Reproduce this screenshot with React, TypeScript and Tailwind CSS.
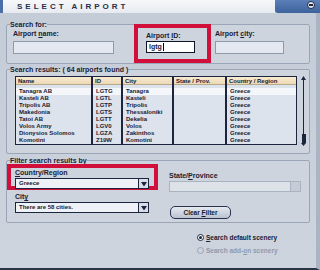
import React from "react";

const rows = [
  { name: "Tanagra AB", id: "LGTG", city: "Tanagra", country: "Greece" },
  { name: "Kasteli AB", id: "LGTL", city: "Kasteli", country: "Greece" },
  { name: "Tripolis AB", id: "LGTP", city: "Tripolis", country: "Greece" },
  { name: "Makedonia", id: "LGTS", city: "Thessaloniki", country: "Greece" },
  { name: "Tatoi AB", id: "LGTT", city: "Dekelia", country: "Greece" },
  { name: "Volos Army", id: "LGV0", city: "Volos", country: "Greece" },
  { name: "Dionysios Solomos", id: "LGZA", city: "Zakinthos", country: "Greece" },
  { name: "Komotini", id: "Z19W", city: "Komotini", country: "Greece" },
];

const cols = [
  { label: "Name", w: "w-[77px]", key: "name" },
  { label: "ID", w: "w-[30px]", key: "id" },
  { label: "City", w: "w-[51px]", key: "city" },
  { label: "State / Prov.", w: "w-[53px]", key: "state" },
  { label: "Country / Region", w: "flex-1", key: "country" },
] as const;

function Select({ value, disabled }: { value: string; disabled?: boolean }) {
  return (
    <div
      className={`flex h-[11px] border ${
        disabled ? "border-[#a9b3c1] bg-[#dde2e9]" : "border-[#1c2540] bg-[#eef1f6]"
      }`}
    >
      <div className="flex-1 pl-[3px] text-[6px] font-bold leading-[9px] text-[#1a2033]">{value}</div>
      <div
        className={`flex w-[10px] items-center justify-center border-l ${
          disabled ? "border-[#a9b3c1] bg-[#c6ccd6]" : "border-[#1c2540] bg-[#d9dee6]"
        }`}
      >
        {!disabled && (
          <svg width="6" height="6" viewBox="0 0 6 6">
            <path d="M0 1h6L3 5.5z" fill="#1c2540" />
          </svg>
        )}
      </div>
    </div>
  );
}

export default function App() {
  return (
    <div className="relative h-[270px] w-[320px] overflow-hidden bg-[#c8d0db] font-['Liberation_Sans',Arial,sans-serif] text-[#1a2033]">
      {/* title bar */}
      <div className="flex h-[13px]">
        <div className="w-[3px] bg-[#4a6fa8]" />
        <div className="flex flex-1 items-center bg-gradient-to-b from-[#f7f8fa] to-[#e6eaef] pl-[14px] text-[8px] font-bold tracking-[3px] text-[#28304a]">
          SELECT AIRPORT
        </div>
        <div className="flex w-[45px] items-start justify-end rounded-bl-[3px] bg-gradient-to-b from-[#5b80b8] to-[#3e629c] pr-[5px] pt-[1px]">
          <div className="flex h-[8px] w-[8px] items-center justify-center rounded-full border border-[#1c2540] bg-[#e6ebf2]">
            <div className="h-[2px] w-[4px] bg-[#1c2540]" />
          </div>
        </div>
      </div>

      <div className="flex h-[257px] border-r-[4px] border-b-[2px] border-[#aab4c2] border-b-[#2c3342]">
        <div className="flex flex-1 flex-col px-[6px] pt-[8px] bg-gradient-to-b from-[#c4ccd8] to-[#cdd4de]">
          {/* search for */}
          <fieldset className="h-[43px] rounded-[2px] border border-[#9aa6b7] px-[3px] bg-[#cdd4de]">
            <legend className="text-[7px] font-bold leading-[7px]">Search for:</legend>
            <div className="flex items-start">
              <div className="ml-[3px] mt-[2px] flex w-[101px] flex-col">
                <div className="text-[7px] font-bold leading-[8px]">
                  Airport <span className="underline">n</span>ame:
                </div>
                <div className="mt-[3px] h-[13px] border border-[#8e99a9] bg-[#e4e9f1]" />
              </div>
              <div className="ml-[20px] -mt-[4px] flex h-[39px] w-[77px] flex-col border-[4px] border-[#d0103a] pl-[8px] pt-[4px]">
                <div className="text-[7px] font-bold leading-[8px]">
                  Airport <span className="underline">I</span>D:
                </div>
                <div className="mt-[1px] flex h-[12px] w-[49px] items-center border border-[#0f1424] bg-white pl-[2px] text-[7px] font-bold">
                  lgtg<span className="ml-[1px] h-[8px] w-px bg-black" />
                </div>
              </div>
              <div className="ml-[4px] mt-[2px] flex w-[69px] flex-col">
                <div className="text-[7px] font-bold leading-[8px]">
                  Airport <span className="underline">c</span>ity:
                </div>
                <div className="mt-[3px] h-[13px] border border-[#8e99a9] bg-[#e4e9f1]" />
              </div>
            </div>
          </fieldset>

          {/* search results */}
          <fieldset className="mt-[2px] h-[88px] rounded-[2px] border border-[#9aa6b7] px-[3px] bg-[#cdd4de]">
            <legend className="text-[7px] font-bold leading-[7px]">Search results: ( 64 airports found )</legend>
            <div className="ml-[5px] mt-[3px] flex">
              <div className="flex h-[69px] w-[282px] border border-[#1c2540] bg-[#dde3ec]">
                {cols.map((c, i) => (
                  <div
                    key={c.key}
                    className={`${c.w} flex flex-col ${i < cols.length - 1 ? "border-r-[2px] border-[#1c2540]" : ""}`}
                  >
                    <div className="h-[8px] border-b border-[#b9a98b] bg-gradient-to-b from-[#f8ead0] to-[#ecd9b6] pl-[2px] text-[6px] font-bold leading-[8px]">
                      {c.label}
                    </div>
                    <div className="mt-[3px] flex flex-col">
                      {rows.map((r, j) => (
                        <div
                          key={j}
                          className={`h-[7px] whitespace-nowrap pl-[3px] text-[6px] font-bold leading-[7px] ${
                            j === 0 ? "bg-[#f4f6fa]" : ""
                          }`}
                        >
                          {c.key === "state" ? "" : r[c.key]}
                        </div>
                      ))}
                    </div>
                  </div>
                ))}
              </div>
              {/* scrollbar */}
              <div className="ml-[4px] flex h-[70px] w-[5px] flex-col items-center">
                <svg width="5" height="4" viewBox="0 0 5 4">
                  <path d="M2.5 0L5 4H0z" fill="#1c2540" />
                </svg>
                <div className="w-px flex-1 bg-[#1c2540]" />
                <div className="h-[9px] w-[4px] bg-[#1c2540]" />
                <svg width="5" height="3" viewBox="0 0 5 3">
                  <path d="M0 0h5L2.5 3z" fill="#1c2540" />
                </svg>
              </div>
            </div>
          </fieldset>

          {/* filter */}
          <fieldset className="mt-[3px] h-[66px] rounded-[2px] border border-[#9aa6b7] px-[3px] bg-[#cdd4de]">
            <legend className="text-[7px] font-bold leading-[7px]">Filter search results by</legend>
            <div className="flex">
              <div className="-ml-[3px] flex w-[151px] flex-col">
                <div className="flex h-[26px] flex-col border-[4px] border-[#d0103a] pl-[4px] pr-[5px] pt-[1px]">
                  <div className="text-[7px] font-bold leading-[8px]">
                    <span className="underline">C</span>ountry/Region
                  </div>
                  <div className="mt-[1px]">
                    <Select value="Greece" />
                  </div>
                </div>
                <div className="ml-[8px] mr-[9px] mt-[3px] flex flex-col">
                  <div className="text-[7px] font-bold leading-[8px]">
                    Cit<span className="underline">y</span>
                  </div>
                  <div className="mt-[1px]">
                    <Select value="There are 58 cities." />
                  </div>
                </div>
              </div>
              <div className="ml-[11px] flex flex-1 flex-col pr-[5px] pt-[8px]">
                <div className="text-[7px] font-bold leading-[8px]">
                  State/<span className="underline">P</span>rovince
                </div>
                <div className="mt-[1px]">
                  <Select value="" disabled />
                </div>
                <button className="ml-[1px] mt-[14px] h-[13px] w-[61px] rounded-[5px] border border-[#2a3350] bg-gradient-to-b from-[#e6eaf0] to-[#b9c2cf] text-[6.5px] font-bold text-[#141a2c]">
                  Clear <span className="underline">F</span>ilter
                </button>
              </div>
            </div>
          </fieldset>

          {/* radios */}
          <div className="ml-[191px] mt-[11px] flex flex-col gap-[6px]">
            <div className="flex items-center gap-[2px] text-[6.5px] font-bold leading-[7px]">
              <div className="flex h-[7px] w-[7px] items-center justify-center rounded-full border border-[#1c2540] bg-white">
                <div className="h-[3px] w-[3px] rounded-full bg-[#1c2540]" />
              </div>
              <span>
                <span className="underline">S</span>earch default scenery
              </span>
            </div>
            <div className="flex items-center gap-[2px] text-[6.5px] font-bold leading-[7px] text-[#8e9aad]">
              <div className="h-[7px] w-[7px] rounded-full border border-[#9aa6b7]" />
              <span>
                Search add-<span className="underline">o</span>n scenery
              </span>
            </div>
          </div>
        </div>
      </div>
    </div>
  );
}
